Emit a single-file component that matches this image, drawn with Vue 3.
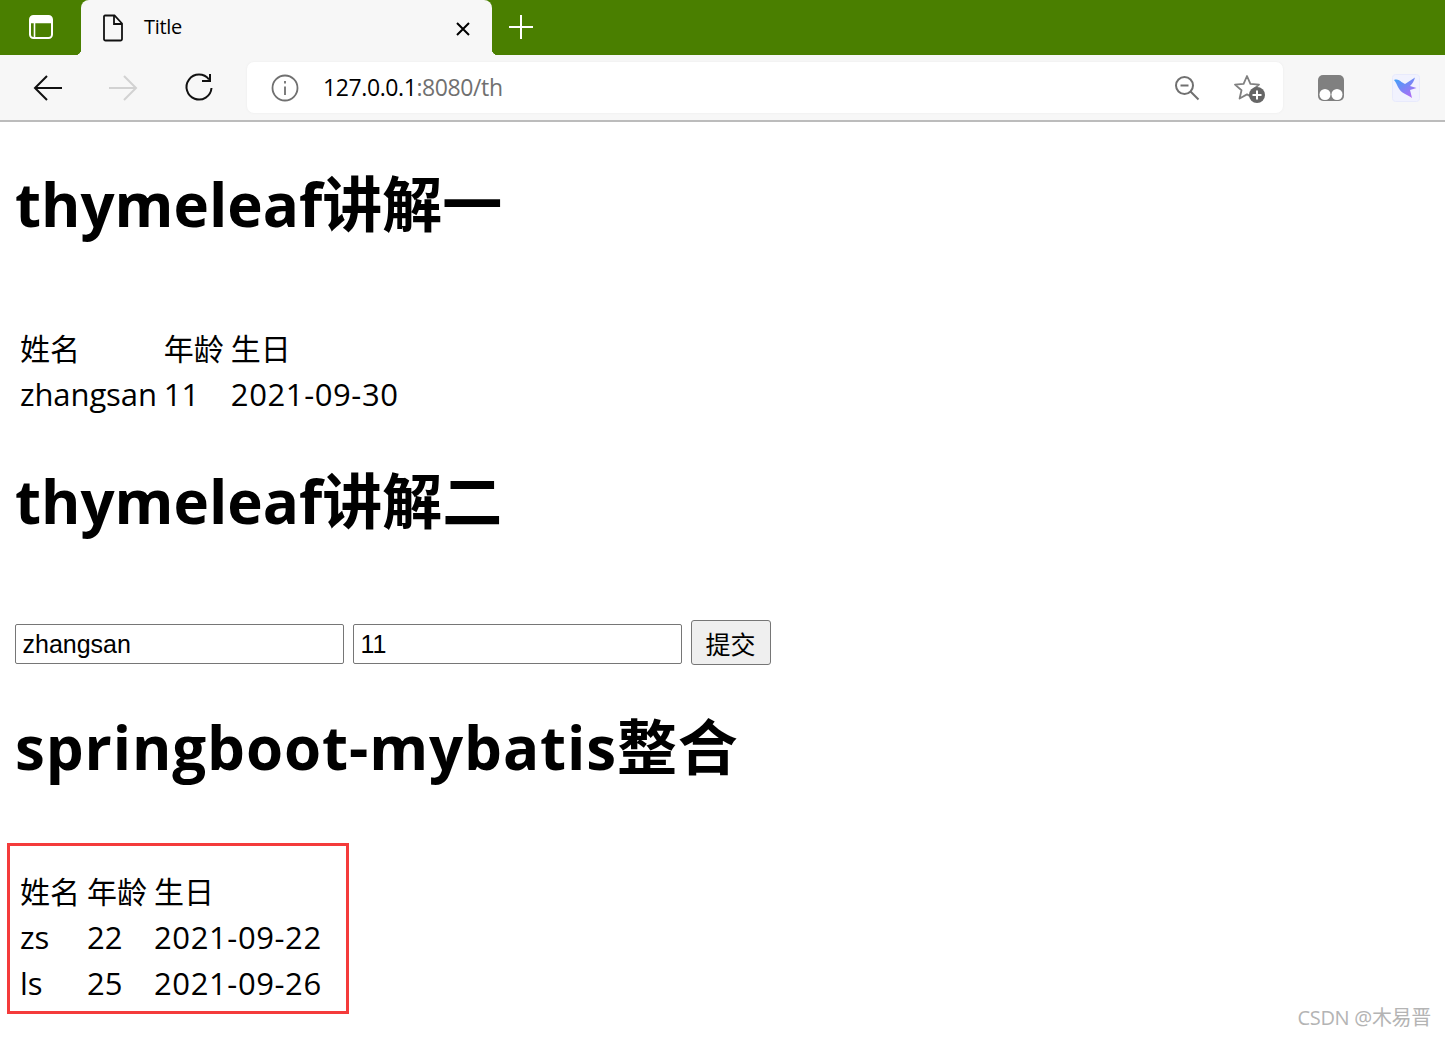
<template>
  <div class="browser">
    <div class="tabStrip">
      <div class="tabAction">
        <svg width="26" height="26" viewBox="0 0 26 26" fill="none" stroke="#fff" stroke-width="2">
          <rect x="2" y="2" width="22" height="22" rx="3.5" />
          <path d="M2 8.5h22M6.5 8.5v15" stroke-width="1.6" />
          <path d="M3 3h20v5H3z" fill="#fff" stroke="none" />
        </svg>
      </div>
      <div class="tab">
        <svg class="tabFile" width="22" height="28" viewBox="0 0 22 28" fill="none" stroke="#111" stroke-width="1.8">
          <path d="M3 1.5h9.5l7.5 8V25a1.5 1.5 0 0 1-1.5 1.5h-15A1.5 1.5 0 0 1 2 25V2.500a1 1 0 0 1 1-1z" />
          <path d="M12 1.500V10h8" />
        </svg>
        <span class="tabTitle">Title</span>
        <svg class="tabClose" width="16" height="16" viewBox="0 0 16 16" stroke="#000" stroke-width="2">
          <path d="M2 2l12 12M14 2L2 14" />
        </svg>
      </div>
      <div class="newTab">
        <svg width="26" height="26" viewBox="0 0 26 26" stroke="#fff" stroke-width="2">
          <path d="M13 1v24M1 13h24" />
        </svg>
      </div>
    </div>

    <div class="toolbar">
      <div class="navBtn">
        <svg width="30" height="28" viewBox="0 0 30 28" fill="none" stroke="#111" stroke-width="2">
          <path d="M29 14H2M14 2L2 14l12 12" />
        </svg>
      </div>
      <div class="navBtn">
        <svg width="30" height="28" viewBox="0 0 30 28" fill="none" stroke="#d2d2d2" stroke-width="2">
          <path d="M1 14h27M16 2l12 12-12 12" />
        </svg>
      </div>
      <div class="navBtn">
        <svg width="30" height="30" viewBox="0 0 30 30" fill="none" stroke="#111" stroke-width="2">
          <path d="M25 6.500A12.500 12.500 0 1 0 27.500 15" />
          <path d="M26 1v7h-8" />
        </svg>
      </div>
      <div class="addressBar">
        <svg class="infoIcon" width="28" height="28" viewBox="0 0 28 28" fill="none" stroke="#707070" stroke-width="1.8">
          <circle cx="14" cy="14" r="12.500" />
          <path d="M14 12.500V21M14 7v2.500" />
        </svg>
        <div class="url"><span class="urlHost">127.0.0.1</span>:8080/th</div>
        <svg class="zoomIcon" width="26" height="26" viewBox="0 0 26 26" fill="none" stroke="#707070" stroke-width="2">
          <circle cx="10.500" cy="10.500" r="8.500" />
          <path d="M6.500 10.500h8M16.500 16.500l8 8" />
        </svg>
        <svg class="starIcon" width="32" height="30" viewBox="0 0 32 30" fill="none">
          <path d="M13 2l3.400 7.800 8.600.8-6.500 5.600 1.900 8.300L13 20.400l-7.400 4.100 1.900-8.300L1 10.600l8.600-.8z" stroke="#808080" stroke-width="1.800" stroke-linejoin="round" />
          <circle cx="23" cy="21" r="8" fill="#666" />
          <path d="M23 16.500v9M18.500 21h9" stroke="#fff" stroke-width="2" />
        </svg>
      </div>
      <div class="extIcon firstExt">
        <svg width="28" height="28" viewBox="0 0 28 28">
          <rect x="1" y="1" width="26" height="26" rx="5" fill="#808080" />
          <circle cx="8" cy="20.500" r="5.500" fill="#fff" />
          <circle cx="20" cy="20.500" r="5.500" fill="#fff" />
        </svg>
      </div>
      <div class="extIcon">
        <svg width="28" height="28" viewBox="0 0 28 28">
          <defs>
            <linearGradient id="birdFill" x1="0" y1="0" x2="0.7" y2="1">
              <stop offset="0" stop-color="#38a4f8" />
              <stop offset="1" stop-color="#b06cf5" />
            </linearGradient>
          </defs>
          <rect x="0.500" y="0.500" width="27" height="27" rx="3" fill="#f1f2fe" stroke="#e8eafc" />
          <path d="M2 6c3-1 5.500 0 7.500 2L13 10l10-6.500c-1 3.500-2.500 6.500-5 8.500l6.500 2-6.500 2 2 8c-3-2-6-3.500-9.500-5.500C6 15.500 5.500 10 2 6z" fill="url(#birdFill)" />
        </svg>
      </div>
    </div>

    <main class="page">
      <h1 class="title">thymeleaf讲解一</h1>
      <table class="dataTable">
        <tr><td>姓名</td><td>年龄</td><td>生日</td></tr>
        <tr>
          <td class="latin name">zhangsan</td><td class="latin">11</td><td class="latin date">2021-09-30</td>
        </tr>
      </table>

      <h1 class="title formTitle">thymeleaf讲解二</h1>
      <form class="userForm" @submit.prevent>
        <input class="textInput" type="text" value="zhangsan" />
        <input class="textInput" type="text" value="11" />
        <button class="submitBtn" type="submit">提交</button>
      </form>

      <h1 class="title wideTitle">springboot-mybatis整合</h1>
      <div class="marked">
        <table class="dataTable">
          <tr><td>姓名</td><td>年龄</td><td>生日</td></tr>
          <tr v-for="user in users" :key="user.name">
            <td class="latin">{{ user.name }}</td>
            <td class="latin">{{ user.age }}</td>
            <td class="latin date">{{ user.birthday }}</td>
          </tr>
        </table>
        <div class="redBox"></div>
      </div>
    </main>

    <div class="watermark">CSDN @木易晋</div>
  </div>
</template>

<script setup>
const users = [
  { name: "zs", age: 22, birthday: "2021-09-22" },
  { name: "ls", age: 25, birthday: "2021-09-26" },
];
</script>

<style scoped>
.browser {
  position: relative;
  width: 1445px;
  height: 1037px;
  overflow: hidden;
  background: #fff;
  color: #000;
  font-family: "Open Sans", "Noto Sans CJK SC", sans-serif;
}

.tabStrip {
  display: flex;
  height: 55px;
  background: #4a7f00;
}

.tabAction {
  display: flex;
  align-items: center;
  justify-content: center;
  width: 81px;
  padding-bottom: 1px;
  box-sizing: border-box;
}

.tab {
  position: relative;
  display: flex;
  align-items: center;
  width: 411px;
  padding-left: 21px;
  box-sizing: border-box;
  background: #f7f7f7;
  border-radius: 8px 8px 0 0;
}

.tab::before,
.tab::after {
  content: "";
  position: absolute;
  bottom: 0;
  width: 6px;
  height: 6px;
}

.tab::before {
  left: -6px;
  background: radial-gradient(circle at 0 0, transparent 6px, #f7f7f7 6.500px);
}

.tab::after {
  right: -6px;
  background: radial-gradient(circle at 100% 0, transparent 6px, #f7f7f7 6.500px);
}

.tabTitle {
  margin-left: 20px;
  margin-bottom: 2px;
  font-size: 20px;
  letter-spacing: -0.3px;
}

.tabClose {
  margin-left: auto;
  margin-right: 21px;
  margin-top: 2px;
}

.newTab {
  display: flex;
  align-items: center;
  margin-left: 16px;
  padding-bottom: 2px;
}

.toolbar {
  display: flex;
  align-items: center;
  height: 65px;
  padding-left: 10px;
  background: #f7f7f7;
  border-bottom: 2px solid #bcbcbc;
}

.navBtn {
  display: flex;
  align-items: center;
  justify-content: center;
  width: 75.500px;
  flex: none;
}

.addressBar {
  display: flex;
  align-items: center;
  width: 1036px;
  height: 51px;
  margin-left: 10.500px;
  padding-left: 24px;
  box-sizing: border-box;
  flex: none;
  background: #fff;
  border-radius: 7px;
  box-shadow: 0 0 3px rgba(0, 0, 0, 0.05);
}

.url {
  margin-left: 24px;
  margin-bottom: 2px;
  font-size: 23px;
  letter-spacing: -0.4px;
  color: #707070;
}

.urlHost {
  color: #000;
}

.zoomIcon {
  margin-left: auto;
}

.starIcon {
  margin-left: 34px;
  margin-right: 17px;
  margin-top: 2px;
}

.extIcon {
  display: flex;
  align-items: center;
  justify-content: center;
  width: 75px;
  flex: none;
}

.firstExt {
  margin-left: 10px;
}

.page {
  padding: 43px 15px 0;
}

.title {
  margin: 0 0 80px;
  padding-bottom: 2px;
  font-size: 60px;
  line-height: 78px;
  font-weight: 700;
}

.dataTable + .title {
  margin-top: 42px;
}

.formTitle {
  margin-bottom: 78px;
}

.wideTitle {
  letter-spacing: 0.9px;
}

.dataTable {
  border-spacing: 3px;
  font-size: 30px;
  line-height: 41px;
}

.dataTable td {
  padding: 0 2px 2px;
}

.dataTable .latin {
  font-size: 31px;
}

.dataTable .name {
  letter-spacing: -0.1px;
}

.dataTable .date {
  letter-spacing: 0.6px;
}

.userForm {
  display: flex;
  align-items: center;
  gap: 9px;
  height: 45px;
  margin-bottom: 43px;
}

.textInput {
  width: 329px;
  height: 40px;
  margin-top: 3px;
  padding: 0 6.500px;
  box-sizing: border-box;
  border: 1.500px solid #767676;
  border-radius: 2px;
  background: #fff;
  font-family: "Liberation Sans", sans-serif;
  font-size: 25px;
  color: #000;
}

.submitBtn {
  width: 80px;
  height: 45px;
  padding: 0 1px 0 0;
  border: 1.500px solid #767676;
  border-radius: 3px;
  background: #efefef;
  font-family: "Liberation Sans", "Noto Sans CJK SC", sans-serif;
  font-size: 25px;
  color: #000;
}

.marked {
  position: relative;
}

.redBox {
  position: absolute;
  left: -8px;
  top: -25px;
  width: 342px;
  height: 171px;
  box-sizing: border-box;
  border: 3px solid #f43b3b;
}

.watermark {
  position: absolute;
  right: 14px;
  bottom: 6px;
  font-size: 20px;
  color: #b4b4b4;
  letter-spacing: -0.3px;
}
</style>
